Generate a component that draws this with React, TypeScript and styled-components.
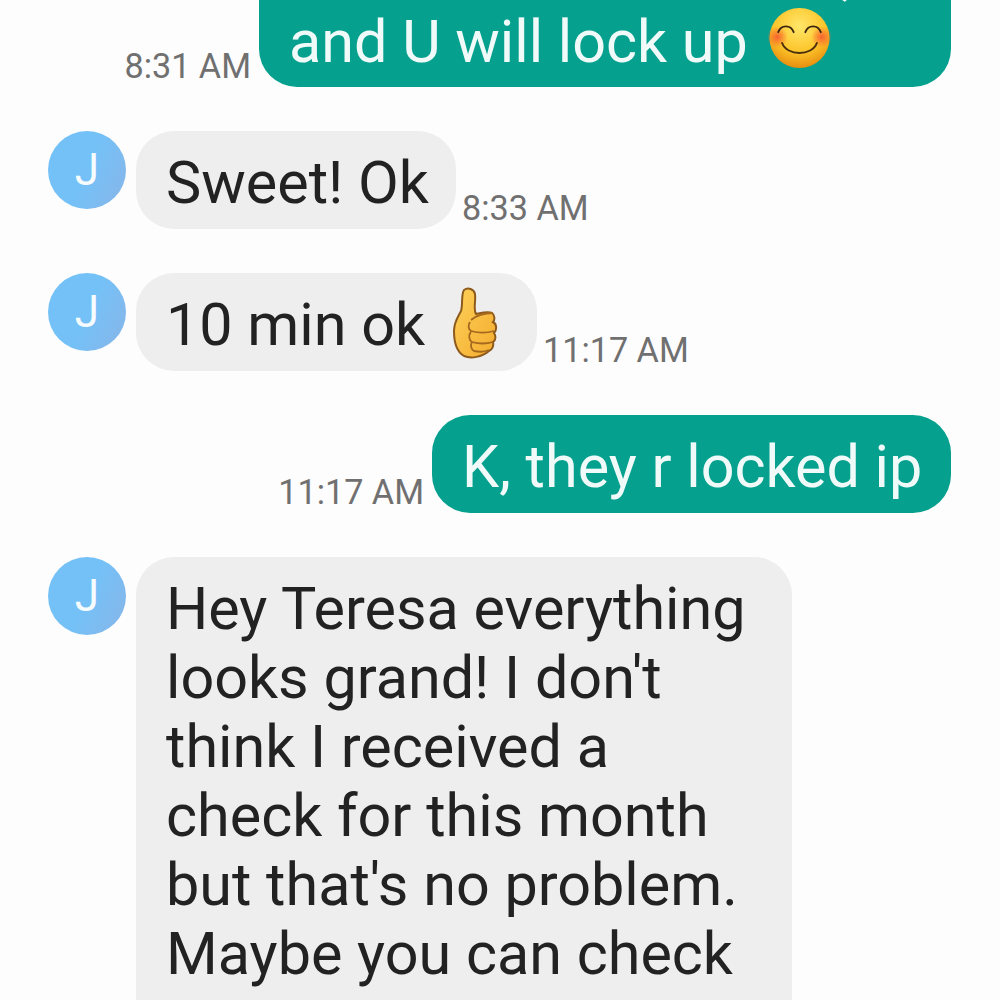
import React from "react";
import styled, { createGlobalStyle } from "styled-components";

const Global = createGlobalStyle`
  html, body { margin: 0; padding: 0; background: #fdfdfd; }
  body { width: 1000px; height: 1000px; overflow: hidden; }
`;

const Thread = styled.div`
  width: 1000px;
  height: 1000px;
  overflow: hidden;
  display: flex;
  flex-direction: column;
  font-family: Roboto, "Liberation Sans", sans-serif;
  background: #fdfdfd;
`;

const Row = styled.div<{ $out?: boolean; $top?: number }>`
  display: flex;
  flex: none;
  align-items: flex-end;
  justify-content: ${(p) => (p.$out ? "flex-end" : "flex-start")};
  margin-top: ${(p) => p.$top ?? 44}px;
  padding: ${(p) => (p.$out ? "0 49px 0 0" : "0 0 0 48px")};
`;

const Avatar = styled.div`
  flex: none;
  align-self: flex-start;
  width: 78px;
  height: 78px;
  margin-right: 10px;
  border-radius: 50%;
  background: linear-gradient(115deg, #74c1f7 50%, #88b5e8 100%);
  color: #f6fbfe;
  font-size: 44px;
  font-weight: 400;
  display: flex;
  align-items: center;
  justify-content: center;
`;

const Bubble = styled.div<{ $out?: boolean; $w: number; $h: number; $pad: number }>`
  flex: none;
  box-sizing: border-box;
  width: ${(p) => p.$w}px;
  height: ${(p) => p.$h}px;
  border-radius: 38px;
  background: ${(p) => (p.$out ? "#06a08f" : "#eeeeee")};
  color: ${(p) => (p.$out ? "#f0fbf9" : "#222222")};
  font-size: 59.3px;
  line-height: 69px;
  padding: ${(p) => p.$pad}px 30px 0;
  white-space: pre;
  overflow: hidden;
`;

const TallBubble = styled(Bubble)`
  border-radius: 38px 38px 0 0;
`;

const Line = styled.div<{ $indent?: number }>`
  display: flex;
  align-items: flex-start;
  height: 69px;
  padding-left: ${(p) => p.$indent ?? 0}px;
`;

const Time = styled.div<{ $out?: boolean }>`
  flex: none;
  color: #707070;
  font-size: 34.2px;
  line-height: 40px;
  margin: ${(p) => (p.$out ? "0 8px 1px 0" : "0 0 1px 6px")};
`;

const SmileSvg = styled.svg`
  flex: none;
  display: block;
  margin: 0 0 0 20px;
`;

const ThumbSvg = styled.svg`
  flex: none;
  display: block;
  margin: -3px 0 0 28px;
`;

const Smile = () => (
  <SmileSvg width="63" height="62" viewBox="0 0 64 64">
    <defs>
      <radialGradient id="face" cx="50%" cy="30%" r="72%">
        <stop offset="0" stopColor="#ffe66a" />
        <stop offset="0.6" stopColor="#fdc52a" />
        <stop offset="1" stopColor="#e58a0c" />
      </radialGradient>
      <radialGradient id="blush">
        <stop offset="0" stopColor="#f7622f" stopOpacity="1" />
        <stop offset="1" stopColor="#f7622f" stopOpacity="0" />
      </radialGradient>
    </defs>
    <circle cx="32" cy="32" r="31" fill="url(#face)" />
    <circle cx="9" cy="31" r="11" fill="url(#blush)" />
    <circle cx="55" cy="31" r="11" fill="url(#blush)" />
    <path d="M10 26c3-8 13-8 16 0M38 26c3-8 13-8 16 0" fill="none" stroke="#3a2610" strokeWidth="1.9" strokeLinecap="round" />
    <path d="M14 37c5 14 31 14 36 0" fill="none" stroke="#4a300f" strokeWidth="1.9" strokeLinecap="round" />
  </SmileSvg>
);

const Thumb = () => (
  <ThumbSvg width="45" height="72" viewBox="0 0 45 72">
    <defs>
      <linearGradient id="thumb" x1="0" y1="0" x2="1" y2="1">
        <stop offset="0" stopColor="#fdd05a" />
        <stop offset="1" stopColor="#f4ad2e" />
      </linearGradient>
    </defs>
    <path
      d="M11 3c4-3 10-1 11 4 1 8-2 15 1 20 5-1 12-3 16-1 3 2 3 7 1 9 4 2 4 8 1 11 2 3 2 7-1 9 1 4-1 8-4 9-7 6-18 8-25 5C4 65 1 55 1 44c0-9 4-14 7-20 2-6 0-17 3-21z"
      fill="url(#thumb)"
      stroke="#8d5a1c"
      strokeWidth="2"
    />
    <path
      d="M18 33c6-5 14-7 22-7M17 35c-2 3-2 7 1 9 7 2 16 2 23 0M18 45c-3 3-2 8 1 10 7 2 14 2 21 0M19 55c-2 3-1 7 2 9 5 1 11 1 15-1"
      fill="none"
      stroke="#a5681e"
      strokeWidth="1.8"
    />
  </ThumbSvg>
);

export default function App() {
  return (
    <Thread>
      <Global />
      <Row $out $top={-69}>
        <Time $out>8:31 AM</Time>
        <Bubble $out $w={692} $h={156} $pad={7}>
          <Line $indent={552}>,</Line>
          <Line>
            and U will lock up
            <Smile />
          </Line>
        </Bubble>
      </Row>
      <Row>
        <Avatar>J</Avatar>
        <Bubble $w={320} $h={98} $pad={17}>Sweet! Ok</Bubble>
        <Time>8:33 AM</Time>
      </Row>
      <Row>
        <Avatar>J</Avatar>
        <Bubble $w={401} $h={98} $pad={17}>
          <Line>
            10 min ok
            <Thumb />
          </Line>
        </Bubble>
        <Time>11:17 AM</Time>
      </Row>
      <Row $out>
        <Time $out>11:17 AM</Time>
        <Bubble $out $w={519} $h={98} $pad={17}>K, they r locked ip</Bubble>
      </Row>
      <Row>
        <Avatar>J</Avatar>
        <TallBubble $w={656} $h={460} $pad={17}>
          {"Hey Teresa everything\nlooks grand! I don't\nthink I received a\ncheck for this month\nbut that's no problem.\nMaybe you can check"}
        </TallBubble>
      </Row>
    </Thread>
  );
}
